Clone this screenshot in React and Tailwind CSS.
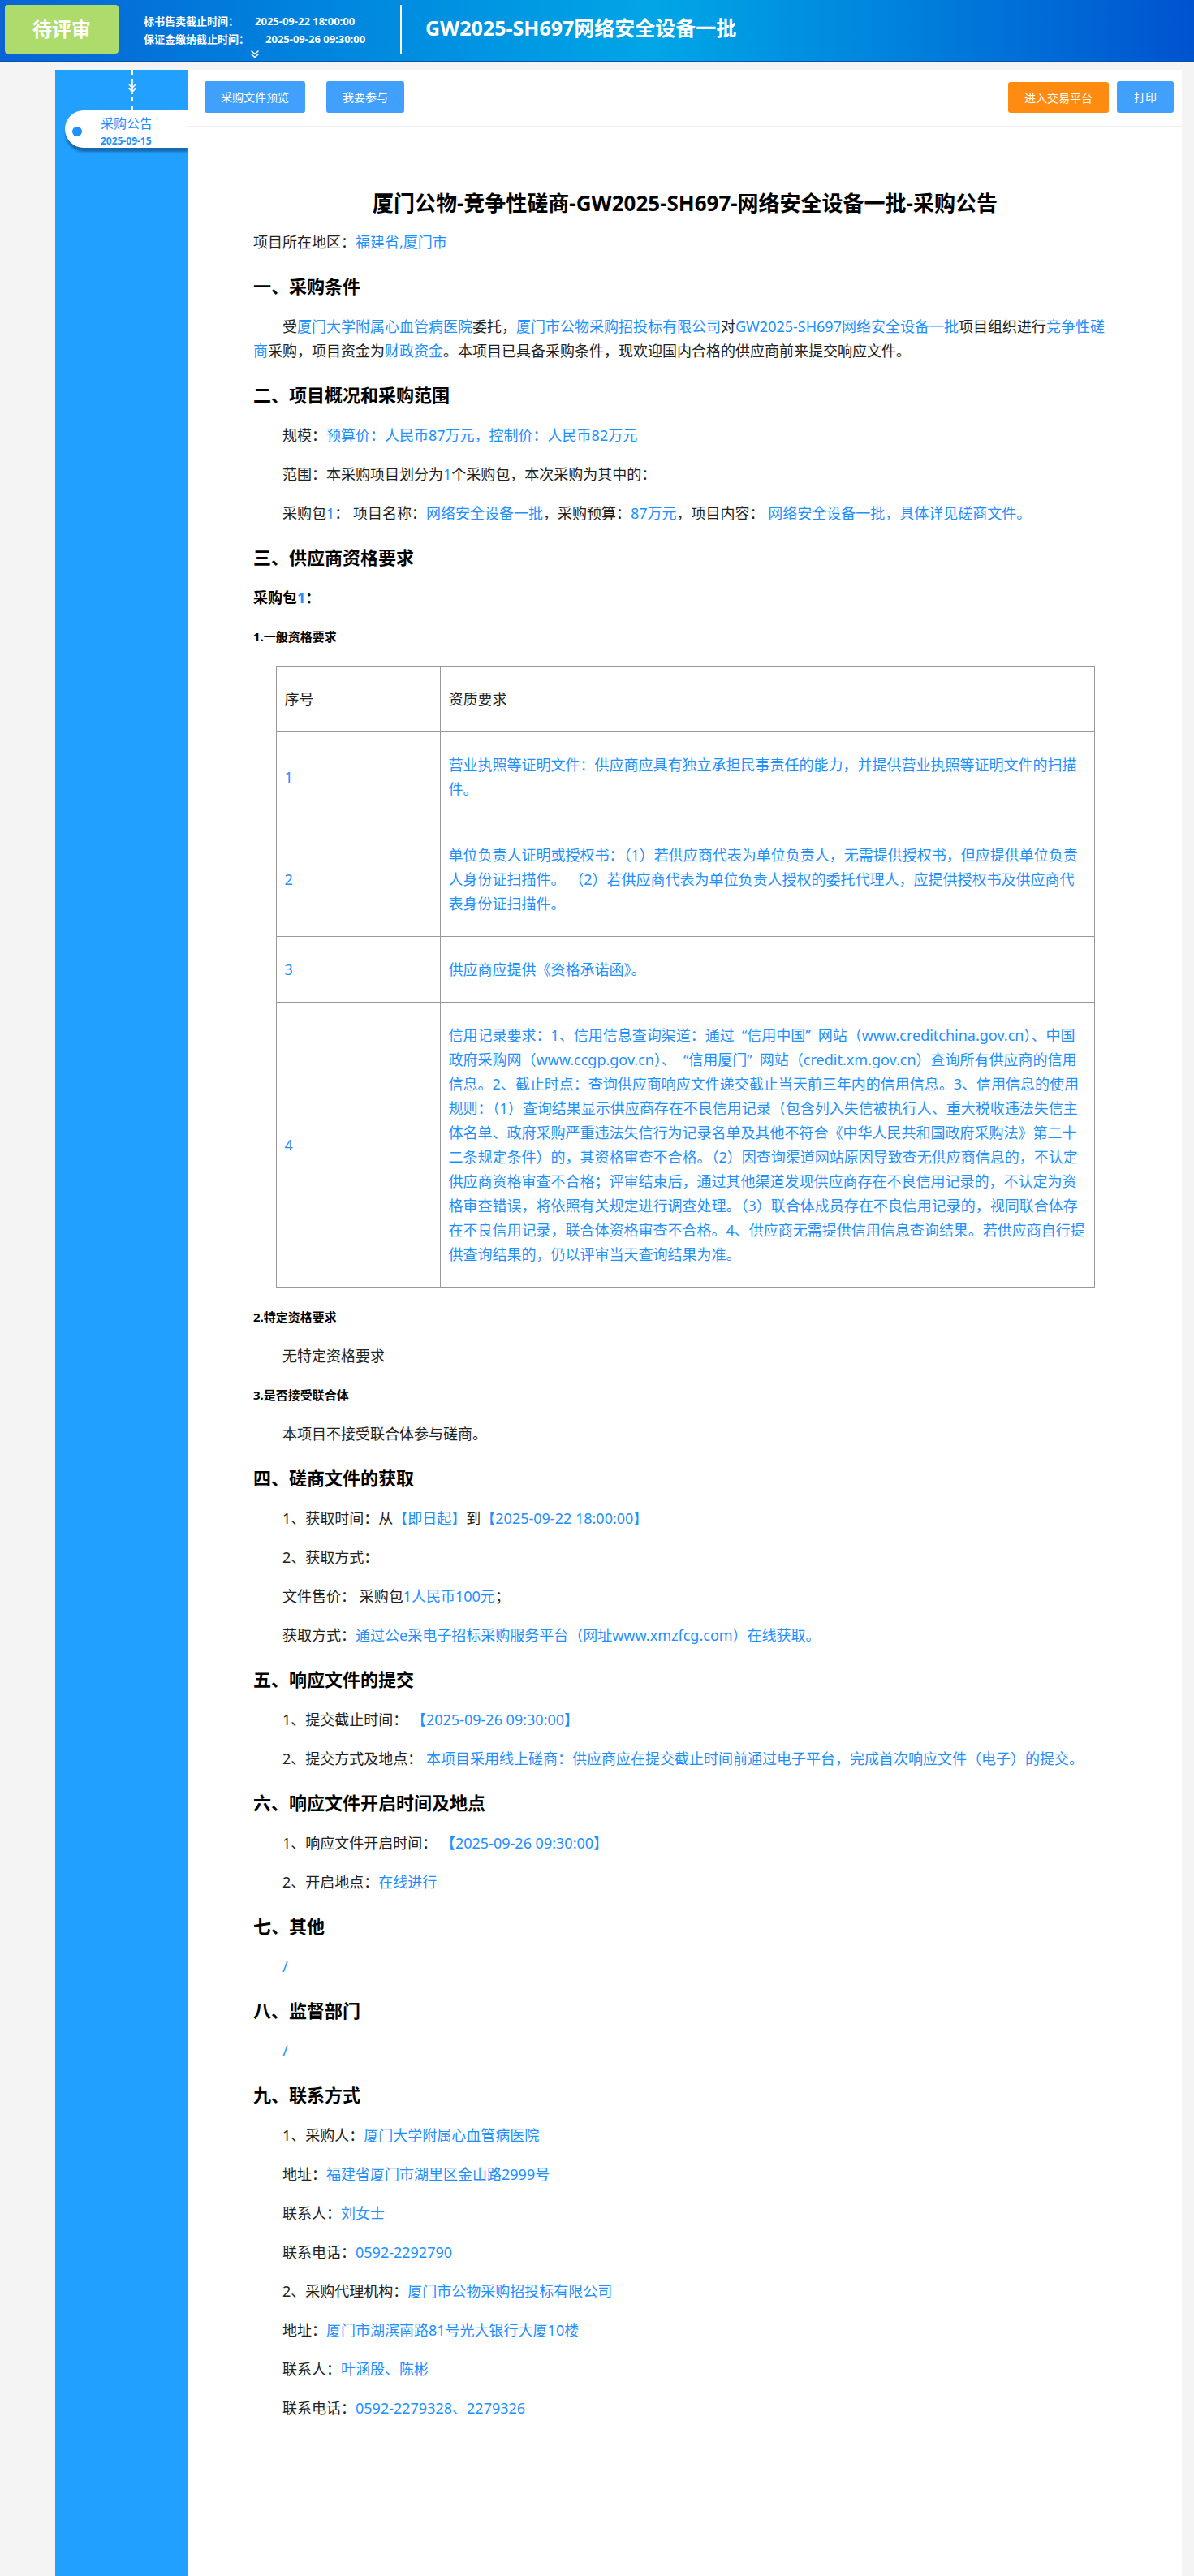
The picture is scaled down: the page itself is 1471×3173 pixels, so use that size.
import React from 'react'

// Blue highlighted value inside the notice text
function V({ children }) {
  return <span className="text-[#1e90ff]">{children}</span>
}

function P({ indent, bold, small, children }) {
  return (
    <p
      className={`leading-[30px] mb-[18px] ${small ? 'text-[15px]' : 'text-[18px]'} ${
        bold ? 'font-bold text-black' : 'text-[#222]'
      } ${indent ? 'indent-[2em]' : ''}`}
    >
      {children}
    </p>
  )
}

function H2({ children }) {
  return <h2 className="text-[22px] font-bold leading-[30px] mt-[24px] mb-[20px] text-black">{children}</h2>
}

function DoubleDown({ w = 12, h = 10 }) {
  return (
    <svg width={w} height={h} viewBox="0 0 12 10" fill="none">
      <path d="M2 1l4 3.5L10 1M2 5l4 3.5L10 5" stroke="white" strokeWidth="1.6" strokeLinecap="round" />
    </svg>
  )
}

// en spaces around the quotes stand in for the full-width quote boxes of the original font
const rows = [
  ['1', '营业执照等证明文件：供应商应具有独立承担民事责任的能力，并提供营业执照等证明文件的扫描件。'],
  [
    '2',
    '单位负责人证明或授权书：（1）若供应商代表为单位负责人，无需提供授权书，但应提供单位负责人身份证扫描件。 （2）若供应商代表为单位负责人授权的委托代理人，应提供授权书及供应商代表身份证扫描件。',
  ],
  ['3', '供应商应提供《资格承诺函》。'],
  [
    '4',
    '信用记录要求：1、信用信息查询渠道：通过\u2002“信用中国”\u2002网站（www.creditchina.gov.cn）、中国政府采购网（www.ccgp.gov.cn）、\u2002“信用厦门”\u2002网站（credit.xm.gov.cn）查询所有供应商的信用信息。2、截止时点：查询供应商响应文件递交截止当天前三年内的信用信息。3、信用信息的使用规则：（1）查询结果显示供应商存在不良信用记录（包含列入失信被执行人、重大税收违法失信主体名单、政府采购严重违法失信行为记录名单及其他不符合《中华人民共和国政府采购法》第二十二条规定条件）的，其资格审查不合格。（2）因查询渠道网站原因导致查无供应商信息的，不认定供应商资格审查不合格；评审结束后，通过其他渠道发现供应商存在不良信用记录的，不认定为资格审查错误，将依照有关规定进行调查处理。（3）联合体成员存在不良信用记录的，视同联合体存在不良信用记录，联合体资格审查不合格。4、供应商无需提供信用信息查询结果。若供应商自行提供查询结果的，仍以评审当天查询结果为准。',
  ],
]

export default function App() {
  return (
    <div className="min-h-screen flex flex-col bg-[#f4f4f4] font-['Noto_Sans','Noto_Sans_CJK_SC',sans-serif]">
      {/* top banner */}
      <header className="h-[76px] flex shrink-0 border-b border-[#0350b8] bg-linear-to-r from-[#0b63d5] via-[#02a6e6] via-55% to-[#0052cf] text-white">
        <div className="mt-[6px] ml-[6px] w-[140px] h-[60px] rounded-[4px] bg-[#addc6c] flex items-center justify-center text-[24px] font-bold">
          待评审
        </div>
        <div className="ml-[31px] w-[316px] pt-[15px] text-[13px] font-bold leading-[22px]">
          <div>
            标书售卖截止时间：<span className="ml-[20px]">2025-09-22 18:00:00</span>
          </div>
          <div>
            保证金缴纳截止时间：<span className="ml-[20px]">2025-09-26 09:30:00</span>
          </div>
          <div className="pl-[131px] pt-[3px]">
            <DoubleDown />
          </div>
        </div>
        <div className="mt-[6px] w-[2px] h-[60px] bg-white" />
        <div className="ml-[29px] mt-[19px] text-[25px] font-bold leading-[30px]">GW2025-SH697网络安全设备一批</div>
      </header>

      <div className="flex flex-1 mt-[10px]">
        <div className="w-[68px] shrink-0" />

        {/* timeline column */}
        <aside className="w-[164px] shrink-0 bg-[#21a0ff]">
          <div className="relative h-[50px] ml-[94px] w-[2px] border-l-2 border-dashed border-white">
            <div className="absolute left-[-7px] top-[14px] bg-[#21a0ff]">
              <svg width="12" height="16" viewBox="0 0 12 16" fill="none">
                <path d="M6 0v16M2 4l4 4 4-4M2 9l4 4 4-4" stroke="white" strokeWidth="1.6" strokeLinecap="round" />
              </svg>
            </div>
          </div>
          <div className="ml-[12px] h-[46px] rounded-l-full bg-white flex shadow-[0_6px_3px_-1px_#1769ad]">
            <span className="ml-[9px] mt-[20px] w-[12px] h-[12px] rounded-full bg-[#1e90ff] shrink-0" />
            <div className="ml-[23px] pt-[6px] text-[#1e8fff]">
              <div className="text-[16px] leading-[20px]">采购公告</div>
              <div className="mt-[4px] text-[12px] leading-[16px] font-bold">2025-09-15</div>
            </div>
          </div>
        </aside>

        {/* notice panel */}
        <main className="flex-1 bg-white">
          <div className="flex justify-between pt-[14px] pb-[16px] pl-[20px] pr-[10px] border-b border-[#eeeeee] text-[14px] text-white">
            <div className="flex gap-[26px]">
              <button className="h-[39px] px-[20px] rounded-[3px] bg-[#41a0fc]">采购文件预览</button>
              <button className="h-[39px] px-[20px] rounded-[3px] bg-[#41a0fc]">我要参与</button>
            </div>
            <div className="flex gap-[10px]">
              <button className="h-[38px] mt-[1px] px-[20px] rounded-[3px] bg-[#ff8c10]">进入交易平台</button>
              <button className="h-[39px] px-[21px] rounded-[3px] bg-[#41a0fc]">打印</button>
            </div>
          </div>

          <div className="px-[80px] pt-[76px] pb-[160px]">
            <h1 className="text-[26px] font-bold leading-[36px] text-center text-black mb-[15px]">
              厦门公物-竞争性磋商-GW2025-SH697-网络安全设备一批-采购公告
            </h1>
            <P>
              项目所在地区：<V>福建省,厦门市</V>
            </P>

            <H2>一、采购条件</H2>
            <P indent>
              受<V>厦门大学附属心血管病医院</V>委托，<V>厦门市公物采购招投标有限公司</V>对
              <V>GW2025-SH697网络安全设备一批</V>项目组织进行<V>竞争性磋</V>
              <V>商</V>采购，项目资金为<V>财政资金</V>
              。本项目已具备采购条件，现欢迎国内合格的供应商前来提交响应文件。
            </P>

            <H2>二、项目概况和采购范围</H2>
            <P indent>
              规模：<V>预算价：人民币87万元，控制价：人民币82万元</V>
            </P>
            <P indent>
              范围：本采购项目划分为<V>1</V>个采购包，本次采购为其中的：
            </P>
            <P indent>
              采购包<V>1</V>： 项目名称：<V>网络安全设备一批</V>，采购预算：<V>87万元</V>，项目内容： <V>网络安全设备一批，具体详见磋商文件。</V>
            </P>

            <H2>三、供应商资格要求</H2>
            <P bold>
              采购包<V>1</V>：
            </P>
            <p className="text-[15px] font-bold leading-[30px] mb-[21px] text-black">1.一般资格要求</p>

            <table className="w-[1009px] mx-auto mb-[21px] border-collapse text-[18px] leading-[30px]">
              <tbody>
                <tr>
                  <td className="w-[202px] border border-[#999] px-[10px] py-[25px] text-[#222]">序号</td>
                  <td className="border border-[#999] px-[10px] py-[25px] text-[#222]">资质要求</td>
                </tr>
                {rows.map(([n, t]) => (
                  <tr key={n}>
                    <td className="border border-[#999] px-[10px] py-[25px] text-[#1e90ff] align-middle">{n}</td>
                    <td className="border border-[#999] px-[10px] py-[25px] text-[#1e90ff]">{t}</td>
                  </tr>
                ))}
              </tbody>
            </table>

            <P bold small>
              2.特定资格要求
            </P>
            <P indent>无特定资格要求</P>
            <P bold small>
              3.是否接受联合体
            </P>
            <P indent>本项目不接受联合体参与磋商。</P>

            <H2>四、磋商文件的获取</H2>
            <P indent>
              1、获取时间：从<V>【即日起】</V>到<V>【2025-09-22 18:00:00】</V>
            </P>
            <P indent>2、获取方式：</P>
            <P indent>
              文件售价： 采购包<V>1人民币100元</V>；
            </P>
            <P indent>
              获取方式：<V>通过公e采电子招标采购服务平台（网址www.xmzfcg.com）在线获取。</V>
            </P>

            <H2>五、响应文件的提交</H2>
            <P indent>
              1、提交截止时间： <V>【2025-09-26 09:30:00】</V>
            </P>
            <P indent>
              2、提交方式及地点： <V>本项目采用线上磋商：供应商应在提交截止时间前通过电子平台，完成首次响应文件（电子）的提交。</V>
            </P>

            <H2>六、响应文件开启时间及地点</H2>
            <P indent>
              1、响应文件开启时间： <V>【2025-09-26 09:30:00】</V>
            </P>
            <P indent>
              2、开启地点：<V>在线进行</V>
            </P>

            <H2>七、其他</H2>
            <P indent>
              <V>/</V>
            </P>

            <H2>八、监督部门</H2>
            <P indent>
              <V>/</V>
            </P>

            <H2>九、联系方式</H2>
            <P indent>
              1、采购人：<V>厦门大学附属心血管病医院</V>
            </P>
            <P indent>
              地址：<V>福建省厦门市湖里区金山路2999号</V>
            </P>
            <P indent>
              联系人：<V>刘女士</V>
            </P>
            <P indent>
              联系电话：<V>0592-2292790</V>
            </P>
            <P indent>
              2、采购代理机构：<V>厦门市公物采购招投标有限公司</V>
            </P>
            <P indent>
              地址：<V>厦门市湖滨南路81号光大银行大厦10楼</V>
            </P>
            <P indent>
              联系人：<V>叶涵殷、陈彬</V>
            </P>
            <P indent>
              联系电话：<V>0592-2279328、2279326</V>
            </P>
          </div>
        </main>

        <div className="w-[15px] shrink-0" />
      </div>
    </div>
  )
}
